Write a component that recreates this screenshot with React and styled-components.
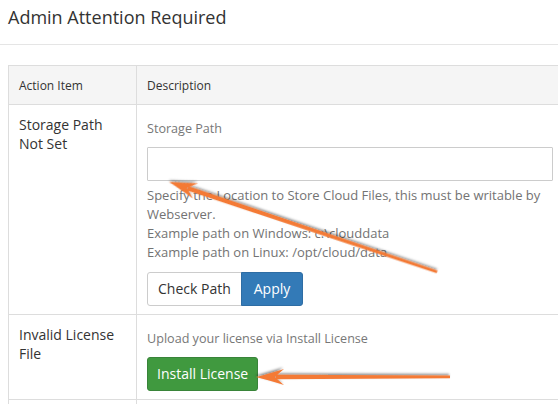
import React from "react";
import styled, { createGlobalStyle } from "styled-components";

const GlobalStyle = createGlobalStyle`
  html, body {
    margin: 0;
    padding: 0;
    background: #fff;
    overflow: hidden;
  }
  body {
    font-family: "Open Sans", "Noto Sans", sans-serif;
    color: #333;
  }
`;

const Page = styled.div`
  position: relative;
  width: 558px;
  height: 404px;
  overflow: hidden;
`;

const PageHeader = styled.div`
  height: 45px;
  box-sizing: border-box;
  padding: 3px 8px 0;
  border-bottom: 1px solid #e5e5e5;
`;

const Title = styled.h1`
  margin: 0;
  font-size: 18px;
  font-weight: 400;
  line-height: 28px;
  color: #333;
`;

const Content = styled.div`
  padding: 20px 0 0 8px;
`;

const Table = styled.table`
  border-collapse: collapse;
  border: 1px solid #ddd;
  table-layout: fixed;
  width: 556px;
`;

const HeadCell = styled.th`
  box-sizing: border-box;
  background: #f5f5f5;
  border: 1px solid #ddd;
  height: 39px;
  padding: 0 10px;
  text-align: left;
  font-size: 12px;
  font-weight: 400;
  color: #333;
  width: ${(p) => p.$width || "auto"};
`;

const Cell = styled.td`
  border: 1px solid #ddd;
  vertical-align: top;
  padding: ${(p) => p.$pad || "9px 10px 8px"};
`;

const ItemName = styled.div`
  font-size: 14px;
  line-height: 19px;
  color: #333;
  padding-top: 1px;
`;

const Label = styled.div`
  font-size: 12.6px;
  line-height: 19px;
  color: #777;
  margin: ${(p) => p.$margin || "4px 0 9px"};
`;

const TextInput = styled.input`
  display: block;
  box-sizing: border-box;
  width: 406px;
  height: 34px;
  border: 1px solid #ccc;
  border-radius: 1px;
  background: #fff;
  margin: 0;
`;

const HelpText = styled.div`
  margin-top: 5px;
  font-size: 13px;
  line-height: 19px;
  color: #737373;
  width: 406px;
`;

const ButtonGroup = styled.div`
  display: flex;
  margin-top: 10px;
`;

const Button = styled.button`
  font-family: "Open Sans", "Noto Sans", sans-serif;
  font-size: 14px;
  line-height: 20px;
  height: 34px;
  box-sizing: border-box;
  padding: 0 ${(p) => p.$padX || "12px"};
  border: 1px solid ${(p) => p.$border};
  background: ${(p) => p.$bg};
  color: ${(p) => p.$color};
  border-radius: ${(p) => p.$radius || "3px"};
  margin: 0 0 0 ${(p) => (p.$joined ? "-1px" : "0")};
  cursor: pointer;
`;

const Overlay = styled.svg`
  position: absolute;
  left: 0;
  top: 0;
  pointer-events: none;
`;

const Arrow = ({ x1, y1, x2, y2 }) => {
  const dx = x2 - x1;
  const dy = y2 - y1;
  const len = Math.sqrt(dx * dx + dy * dy);
  const angle = (Math.atan2(dy, dx) * 180) / Math.PI;
  return (
    <g transform={`translate(${x2} ${y2}) rotate(${angle})`} filter="url(#shadow)">
      <polygon points={`${-len},-1.3 -20,-2.3 -20,2.3 ${-len},1.5`} fill="#f47a36" />
      <path
        d="M0,0 Q-12,-3 -28,-8 Q-22,-3 -19,0 Q-22,3 -28,8 Q-12,3 0,0 Z"
        fill="#f47a36"
      />
    </g>
  );
};

export default function App() {
  return (
    <Page>
      <GlobalStyle />
      <PageHeader>
        <Title>Admin Attention Required</Title>
      </PageHeader>
      <Content>
        <Table>
          <thead>
            <tr>
              <HeadCell $width="128px">Action Item</HeadCell>
              <HeadCell>Description</HeadCell>
            </tr>
          </thead>
          <tbody>
            <tr>
              <Cell>
                <ItemName>Storage Path Not Set</ItemName>
              </Cell>
              <Cell $pad="10px 10px 8px">
                <Label>Storage Path</Label>
                <TextInput type="text" />
                <HelpText>
                  Specify the Location to Store Cloud Files, this must be writable by Webserver.
                  <br />
                  Example path on Windows: c:\clouddata
                  <br />
                  Example path on Linux: /opt/cloud/data
                </HelpText>
                <ButtonGroup>
                  <Button $bg="#fff" $border="#ccc" $color="#333" $radius="3px 0 0 3px" $padX="10px">
                    Check Path
                  </Button>
                  <Button $bg="#337ab7" $border="#2e6da4" $color="#fff" $radius="0 3px 3px 0" $joined>
                    Apply
                  </Button>
                </ButtonGroup>
              </Cell>
            </tr>
            <tr>
              <Cell>
                <ItemName>Invalid License File</ItemName>
              </Cell>
              <Cell>
                <Label $margin="5px 0 9px">Upload your license via Install License</Label>
                <Button $bg="#40993f" $border="#398439" $color="#fff" $padX="9px">
                  Install License
                </Button>
              </Cell>
            </tr>
            <tr>
              <Cell>
                <ItemName>&nbsp;</ItemName>
              </Cell>
              <Cell>
                <Label>&nbsp;</Label>
              </Cell>
            </tr>
          </tbody>
        </Table>
      </Content>
      <Overlay width="558" height="404" viewBox="0 0 558 404">
        <defs>
          <filter id="shadow" x="-20%" y="-50%" width="140%" height="200%">
            <feDropShadow dx="1" dy="1.5" stdDeviation="1.2" floodColor="#000" floodOpacity="0.45" />
          </filter>
        </defs>
        <Arrow x1={437} y1={272} x2={169} y2={182} />
        <Arrow x1={450} y1={377} x2={256} y2={377} />
      </Overlay>
    </Page>
  );
}
